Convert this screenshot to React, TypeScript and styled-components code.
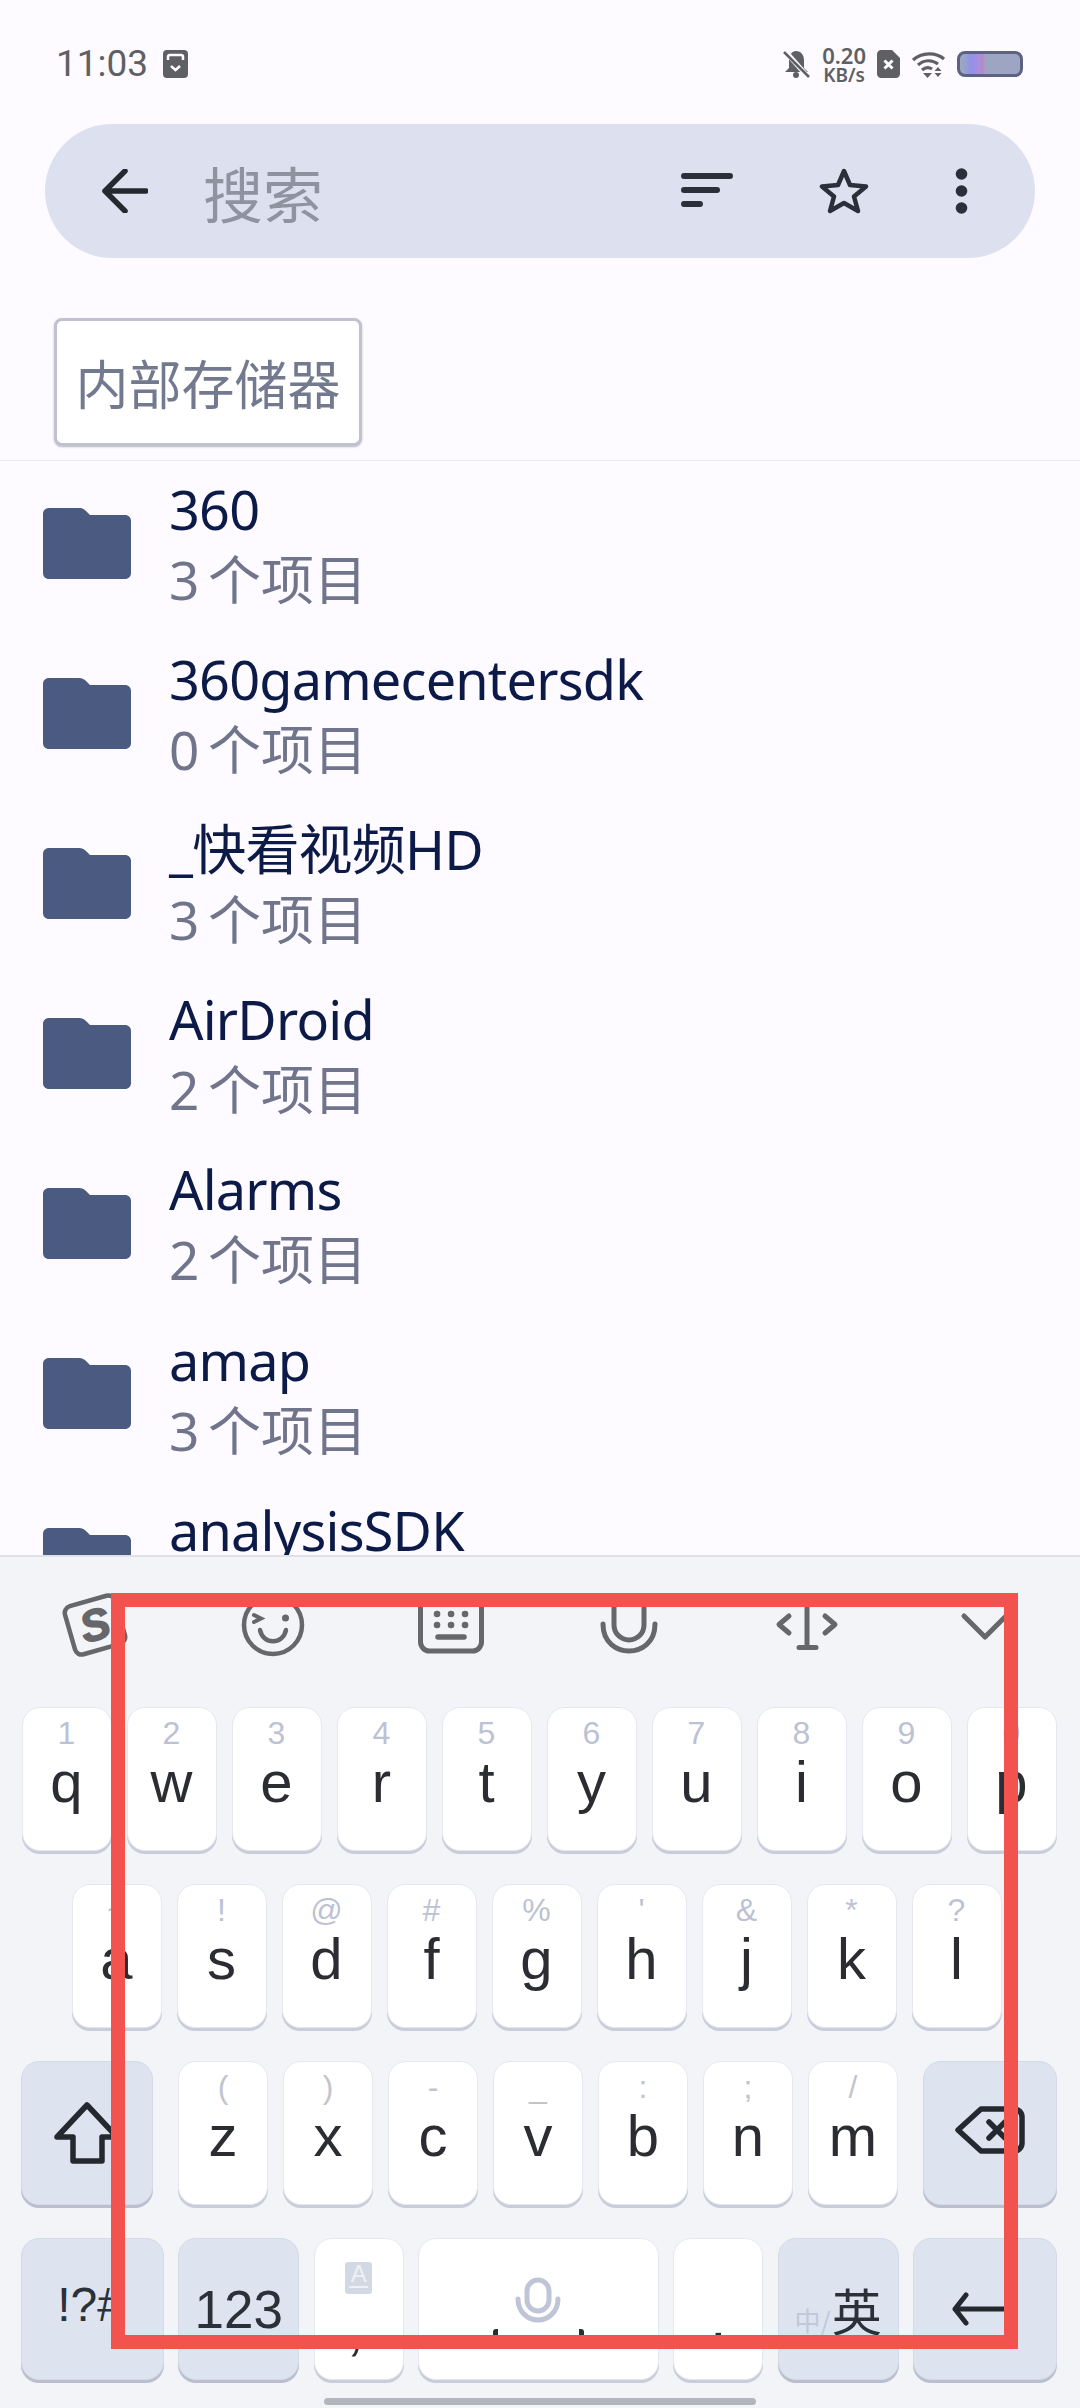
import styled, { createGlobalStyle } from "styled-components";

const GlobalStyle = createGlobalStyle`
  html, body {
    margin: 0;
    padding: 0;
    background: #fdfbff;
  }
  * {
    box-sizing: border-box;
  }
`;

const Screen = styled.div`
  position: relative;
  display: flex;
  flex-direction: column;
  width: 1080px;
  height: 2408px;
  overflow: hidden;
  background: #fdfbff;
  font-family: "Noto Sans", "Noto Sans CJK SC", sans-serif;
`;

const StatusBar = styled.div`
  display: flex;
  align-items: center;
  justify-content: space-between;
  flex: none;
  height: 124px;
  padding: 4px 57px 0 56px;
  color: #5f6064;
`;

const StatusLeft = styled.div`
  display: flex;
  align-items: center;
  gap: 15px;
`;

const Clock = styled.span`
  font-family: Roboto, sans-serif;
  font-size: 37px;
  line-height: 44px;
`;

const StatusRight = styled.div`
  display: flex;
  align-items: center;
`;

const Speed = styled.div`
  display: flex;
  flex-direction: column;
  align-items: center;
  margin: 0 11px 0 12px;
  font-family: "Noto Sans", sans-serif;
  font-weight: 600;
`;

const SpeedValue = styled.span`
  font-size: 22px;
  line-height: 22px;
`;

const SpeedUnit = styled.span`
  font-size: 19px;
  line-height: 19px;
`;

const Battery = styled.div`
  width: 66px;
  height: 26px;
  margin-left: 11px;
  border: 3px solid #5c6284;
  border-radius: 8px;
  background: linear-gradient(
    90deg,
    #9ea5c3 0 5%,
    #8f93e8 18%,
    #a88fe0 30%,
    #b48ac8 38%,
    #9ea5c3 42%
  );
`;

const SearchBar = styled.div`
  display: flex;
  align-items: center;
  flex: none;
  height: 134px;
  margin: 0 45px;
  padding: 0 67px 0 57px;
  border-radius: 67px;
  background: #dce0ef;
`;

const Placeholder = styled.span`
  margin-left: 55px;
  font-family: "Noto Sans CJK SC", sans-serif;
  font-size: 60px;
  font-weight: 400;
  color: #8f93a0;
`;

const SearchActions = styled.div`
  display: flex;
  align-items: center;
  gap: 86px;
  margin-left: auto;
`;

const BreadcrumbBar = styled.div`
  flex: none;
  height: 203px;
  padding: 60px 0 0 54px;
  border-bottom: 1px solid #eceaf0;
`;

const Chip = styled.div`
  display: flex;
  align-items: center;
  justify-content: center;
  width: 308px;
  height: 128px;
  border: 3px solid #c2c1cf;
  border-radius: 8px;
  background: #fff;
  box-shadow: 0 1px 2px #b5b5c5;
  font-family: "Noto Sans CJK SC", sans-serif;
  font-size: 53px;
  font-weight: 400;
  color: #737a90;
`;

const FileList = styled.div`
  flex: 1;
  min-height: 0;
  overflow: hidden;
`;

const FileRow = styled.div`
  display: flex;
  align-items: center;
  height: 170.1px;
  padding: 0 0 6px 43px;
`;

const FileText = styled.div`
  display: flex;
  flex-direction: column;
  min-height: 140px;
  margin: 2px 0 0 38px;
`;

const FileName = styled.span`
  font-size: 54px;
  line-height: 70px;
  letter-spacing: -0.8px;
  color: #0c1a48;
`;

const FileMeta = styled.span`
  margin-top: 2px;
  font-family: "Noto Sans", "Noto Sans CJK SC", sans-serif;
  font-size: 53px;
  font-weight: 400;
  line-height: 68px;
  word-spacing: -5px;
  color: #70758c;
`;

const Keyboard = styled.div`
  flex: none;
  display: flex;
  flex-direction: column;
  height: 853px;
  border-top: 2px solid #dfe1e6;
  background: #f2f4f8;
`;

const Toolbar = styled.div`
  display: grid;
  grid-template-columns: repeat(6, 178px);
  height: 150px;
  padding: 36px 0 0 6px;
  color: #66676b;
`;

const ToolCell = styled.div`
  display: flex;
  justify-content: center;
`;

const KeyRows = styled.div`
  display: flex;
  flex-direction: column;
  gap: 33px;
  padding: 0 23px 0 21px;
`;

const KeyRow = styled.div<{ $spread?: boolean; $nudge?: number }>`
  display: flex;
  justify-content: ${(p) => (p.$spread ? "space-between" : "center")};
  gap: ${(p) => (p.$spread ? "0" : "15px")};
  padding-right: ${(p) => p.$nudge ?? 0}px;
`;

const LetterGroup = styled.div`
  display: flex;
  gap: 15px;
`;

const Key = styled.div<{ $w?: number; $h?: number; $fn?: boolean }>`
  display: flex;
  flex-direction: column;
  align-items: center;
  width: ${(p) => p.$w ?? 90}px;
  height: ${(p) => p.$h ?? 144}px;
  border: 1px solid ${(p) => (p.$fn ? "#d5dae6" : "#e6e8ef")};
  border-radius: 18px;
  background: ${(p) => (p.$fn ? "#dde3ef" : "#fff")};
  box-shadow: 0 3px 0 ${(p) => (p.$fn ? "#b9bfce" : "#c9cdd9")};
  font-family: "Liberation Sans", Arial, sans-serif;
  color: #2b2d33;
`;

const Hint = styled.span<{ $pale?: boolean }>`
  margin-top: 7px;
  font-size: 32px;
  line-height: 36px;
  height: 36px;
  color: ${(p) => (p.$pale ? "#c3c5cb" : "#bcc2d3")};
`;

const Letter = styled.span`
  font-size: 58px;
  line-height: 62px;
`;

const FnKey = styled(Key)<{ $pb?: number; $pr?: number }>`
  justify-content: center;
  padding-bottom: ${(p) => p.$pb ?? 0}px;
  padding-right: ${(p) => p.$pr ?? 0}px;
`;

const FnLabel = styled.span<{ $size: number }>`
  font-size: ${(p) => p.$size}px;
  color: #2c3038;
`;

const Badge = styled.span`
  display: flex;
  flex-direction: column;
  align-items: center;
  width: 27px;
  height: 32px;
  margin-top: 23px;
  border-radius: 3px;
  background: #d3d8e5;
  font-size: 24px;
  line-height: 24px;
  color: #eef0f6;
`;

const BadgeRule = styled.span`
  width: 19px;
  height: 2px;
  background: #eef0f6;
`;

const Comma = styled.span`
  margin-top: 4px;
  font-size: 58px;
  font-style: italic;
  line-height: 62px;
  color: #2b2d33;
`;

const Period = styled.span`
  margin-top: 49px;
  font-size: 58px;
  line-height: 62px;
  color: #2b2d33;
`;

const SpaceBracket = styled.span`
  width: 91px;
  height: 18px;
  margin-top: 6px;
  border: solid #2b2d33;
  border-width: 0 5px 5px;
  border-radius: 3px;
`;

const SpaceMic = styled.svg`
  margin-top: 38px;
`;

const LangLabel = styled.div`
  display: flex;
  align-items: baseline;
  font-family: "Noto Sans CJK SC", sans-serif;
  color: #2c3038;
`;

const LangOff = styled.span`
  font-size: 26px;
  color: #c2c8d9;
`;

const LangOn = styled.span`
  margin-left: 1px;
  font-size: 50px;
`;

const HomeBar = styled.div`
  position: absolute;
  left: 324px;
  bottom: 3px;
  width: 432px;
  height: 7px;
  border-radius: 4px;
  background: #b4b6bd;
`;

const Annotation = styled.div`
  position: absolute;
  left: 111px;
  top: 1593px;
  width: 907px;
  height: 756px;
  border: 14px solid #f2534e;
  pointer-events: none;
`;

const files = [
  { name: "360", meta: "3 个项目" },
  { name: "360gamecentersdk", meta: "0 个项目" },
  { name: "_快看视频HD", meta: "3 个项目" },
  { name: "AirDroid", meta: "2 个项目" },
  { name: "Alarms", meta: "2 个项目" },
  { name: "amap", meta: "3 个项目" },
  { name: "analysisSDK" },
];

const row1 = [
  ["q", "1"],
  ["w", "2"],
  ["e", "3"],
  ["r", "4"],
  ["t", "5"],
  ["y", "6"],
  ["u", "7"],
  ["i", "8"],
  ["o", "9"],
  ["p", "0"],
];
const row2 = [
  ["a", "~"],
  ["s", "!"],
  ["d", "@"],
  ["f", "#"],
  ["g", "%"],
  ["h", "'"],
  ["j", "&"],
  ["k", "*"],
  ["l", "?"],
];
const row3 = [
  ["z", "("],
  ["x", ")"],
  ["c", "-"],
  ["v", "_"],
  ["b", ":"],
  ["n", ";"],
  ["m", "/"],
];

function FolderIcon() {
  return (
    <svg width="88" height="71" viewBox="0 0 88 71">
      <path
        d="M6 0H36C39 0 41 1 43 3L47 7H82C85.500 7 88 9.500 88 13V65C88 68.500 85.500 71 82 71H6C2.500 71 0 68.500 0 65V6C0 2.500 2.500 0 6 0Z"
        fill="#4a5a80"
      />
    </svg>
  );
}

function LetterKey({ letter, hint, pale }: { letter: string; hint: string; pale?: boolean }) {
  return (
    <Key>
      <Hint $pale={pale}>{hint}</Hint>
      <Letter>{letter}</Letter>
    </Key>
  );
}

function App() {
  return (
    <Screen>
      <GlobalStyle />
      <StatusBar>
        <StatusLeft>
          <Clock>11:03</Clock>
          <svg width="25" height="28" viewBox="0 0 25 28">
            <rect width="25" height="28" rx="4" fill="#5f6064" />
            <path d="M5 10V7C5 5.500 6 5 7 5H18C19 5 20 5.500 20 7V10" fill="none" stroke="#fdfbff" strokeWidth="2.500" />
            <path d="M8 16L12.500 20L17 16" fill="none" stroke="#fdfbff" strokeWidth="2.500" />
          </svg>
        </StatusLeft>
        <StatusRight>
          <svg width="27" height="28" viewBox="0 0 27 28">
            <path d="M13 1C18 1 21 5 21 10V18L25 22H2L6 18V10C6 5 9 1 13 1Z" fill="#5f6064" />
            <circle cx="13" cy="25" r="3" fill="#5f6064" />
            <path d="M2 1L25 27" stroke="#fdfbff" strokeWidth="5" />
            <path d="M1 2L26 27" stroke="#5f6064" strokeWidth="2.500" />
          </svg>
          <Speed>
            <SpeedValue>0.20</SpeedValue>
            <SpeedUnit>KB/s</SpeedUnit>
          </Speed>
          <svg width="23" height="28" viewBox="0 0 23 28">
            <path d="M4 0H15L23 8V24C23 26 21 28 19 28H4C2 28 0 26 0 24V4C0 2 2 0 4 0Z" fill="#5f6064" />
            <path d="M7.500 10.500L15.500 18.500M15.500 10.500L7.500 18.500" stroke="#fff" strokeWidth="3" />
          </svg>
          <svg width="35" height="27" viewBox="0 0 35 27" style={{ marginLeft: 11 }}>
            <g fill="none" stroke="#5f6064" strokeWidth="3.200">
              <path d="M2 9C11 1 25 1 33 8" />
              <path d="M7 14C13 8.500 21 8.500 27 13" />
              <path d="M11 19C14.500 16 18 16 21 18" />
            </g>
            <path d="M12 22H21L16.500 27Z" fill="#5f6064" />
            <path d="M27 16L30.500 20H23.500ZM23.500 22H30.500L27 26Z" fill="#5f6064" />
          </svg>
          <Battery />
        </StatusRight>
      </StatusBar>

      <SearchBar>
        <svg width="46" height="44" viewBox="0 0 46 44">
          <path d="M23 2L3 22L23 42M3 22H44" fill="none" stroke="#24282f" strokeWidth="5.500" strokeLinecap="round" strokeLinejoin="round" />
        </svg>
        <Placeholder>搜索</Placeholder>
        <SearchActions>
          <svg width="52" height="36" viewBox="0 0 52 36">
            <path d="M3 3H49M3 17H36M3 31H19" stroke="#2b2f3a" strokeWidth="6" strokeLinecap="round" />
          </svg>
          <svg width="50" height="46" viewBox="0 0 50 46">
            <path d="M25 3L31 17L47 18.500L35 28.500L39 43L25 35L11 43L15 28.500L3 18.500L19 17Z" fill="none" stroke="#2b2f3a" strokeWidth="4.500" strokeLinejoin="round" />
          </svg>
          <svg width="13" height="46" viewBox="0 0 13 46">
            <circle cx="6.500" cy="6" r="5.800" fill="#2b2f3a" />
            <circle cx="6.500" cy="23" r="5.800" fill="#2b2f3a" />
            <circle cx="6.500" cy="40" r="5.800" fill="#2b2f3a" />
          </svg>
        </SearchActions>
      </SearchBar>

      <BreadcrumbBar>
        <Chip>内部存储器</Chip>
      </BreadcrumbBar>

      <FileList>
        {files.map((file) => (
          <FileRow key={file.name}>
            <FolderIcon />
            <FileText>
              <FileName>{file.name}</FileName>
              {file.meta && <FileMeta>{file.meta}</FileMeta>}
            </FileText>
          </FileRow>
        ))}
      </FileList>

      <Keyboard>
        <Toolbar>
          <ToolCell>
            <svg width="80" height="64" viewBox="0 0 80 64">
              <g transform="rotate(-16 40 32)">
                <rect x="14" y="7" width="52" height="50" rx="7" fill="none" stroke="currentColor" strokeWidth="4.500" />
                <text x="40" y="47" textAnchor="middle" fontFamily="Liberation Sans" fontWeight="700" fontStyle="italic" fontSize="44" stroke="currentColor" strokeWidth="1.500" fill="currentColor">
                  S
                </text>
              </g>
            </svg>
          </ToolCell>
          <ToolCell>
            <svg width="80" height="64" viewBox="0 0 80 64" fill="none" stroke="currentColor" strokeWidth="4.500" strokeLinecap="round">
              <circle cx="40" cy="32" r="29" />
              <path d="M21 22L28 25.500L21 29" strokeWidth="4" />
              <circle cx="52.500" cy="25" r="3.500" fill="currentColor" stroke="none" />
              <path d="M27 37C30 52 50 52 53 37" />
            </svg>
          </ToolCell>
          <ToolCell>
            <svg width="80" height="64" viewBox="0 0 80 64" fill="none" stroke="currentColor" strokeWidth="5" strokeLinecap="round">
              <rect x="9.500" y="2" width="61" height="56" rx="9" />
              <path d="M26 21H26.100M40 21H40.100M54 21H54.100M26 32H26.100M40 32H40.100M54 32H54.100" strokeWidth="6.500" />
              <path d="M27 44H53" strokeWidth="5.500" />
            </svg>
          </ToolCell>
          <ToolCell>
            <svg width="80" height="64" viewBox="0 0 80 64" fill="none" stroke="currentColor" strokeWidth="5" strokeLinecap="round">
              <path d="M14 31C14 50 28 58 40 58C52 58 66 50 66 31" />
              <rect x="25" y="0" width="30" height="47" rx="15" />
            </svg>
          </ToolCell>
          <ToolCell>
            <svg width="80" height="64" viewBox="0 0 80 64" fill="none" stroke="currentColor" strokeWidth="5" strokeLinecap="round" strokeLinejoin="round">
              <path d="M40 4V54M32 54.500H49" />
              <path d="M22 23L12 31.500L22 40M58 23L68 31.500L58 40" />
            </svg>
          </ToolCell>
          <ToolCell>
            <svg width="80" height="64" viewBox="0 0 80 64" fill="none" stroke="currentColor" strokeWidth="5" strokeLinecap="round" strokeLinejoin="round">
              <path d="M19 23L40 44L61 23" />
            </svg>
          </ToolCell>
        </Toolbar>

        <KeyRows>
          <KeyRow>
            {row1.map(([letter, hint]) => (
              <LetterKey key={letter} letter={letter} hint={hint} />
            ))}
          </KeyRow>
          <KeyRow $nudge={5}>
            {row2.map(([letter, hint]) => (
              <LetterKey key={letter} letter={letter} hint={hint} />
            ))}
          </KeyRow>
          <KeyRow $spread>
            <FnKey $w={132} $fn>
              <svg width="70" height="62" viewBox="0 0 70 62">
                <path d="M35 3L65 35H50V59H21V35H5Z" fill="none" stroke="#24282f" strokeWidth="5.500" strokeLinejoin="round" />
              </svg>
            </FnKey>
            <LetterGroup>
              {row3.map(([letter, hint]) => (
                <LetterKey key={letter} letter={letter} hint={hint} pale />
              ))}
            </LetterGroup>
            <FnKey $w={134} $fn $pb={5}>
              <svg width="72" height="52" viewBox="0 0 72 52">
                <path d="M4 25L27 4H60C64.500 4 68 7.500 68 12V38C68 42.500 64.500 46 60 46H27Z" fill="none" stroke="#24282f" strokeWidth="5.500" strokeLinejoin="round" />
                <path d="M35 17L51 33M51 17L35 33" stroke="#24282f" strokeWidth="5.500" strokeLinecap="round" />
              </svg>
            </FnKey>
          </KeyRow>
          <KeyRow $spread>
            <FnKey $w={143} $h={142} $fn $pb={10} $pr={4}>
              <FnLabel $size={48}>!?#</FnLabel>
            </FnKey>
            <FnKey $w={121} $h={142} $fn>
              <FnLabel $size={53}>123</FnLabel>
            </FnKey>
            <Key $w={90} $h={142}>
              <Badge>
                A
                <BadgeRule />
              </Badge>
              <Comma>,</Comma>
            </Key>
            <Key $w={241} $h={142}>
              <SpaceMic width="46" height="46" viewBox="0 0 46 46" fill="none" stroke="#bfc5d6" strokeWidth="5" strokeLinecap="round">
                <rect x="12" y="3" width="22" height="31" rx="11" />
                <path d="M3 22C3 35 13 43 23 43C33 43 43 35 43 22" />
              </SpaceMic>
              <SpaceBracket />
            </Key>
            <Key $w={90} $h={142}>
              <Period>.</Period>
            </Key>
            <FnKey $w={121} $h={142} $fn>
              <LangLabel>
                <LangOff>中/</LangOff>
                <LangOn>英</LangOn>
              </LangLabel>
            </FnKey>
            <FnKey $w={144} $h={142} $fn>
              <svg width="66" height="34" viewBox="0 0 66 34">
                <path d="M14 3L3 17L14 31M3 17H63" fill="none" stroke="#24282f" strokeWidth="5" strokeLinecap="round" strokeLinejoin="round" />
              </svg>
            </FnKey>
          </KeyRow>
        </KeyRows>
      </Keyboard>

      <HomeBar />
      <Annotation />
    </Screen>
  );
}

export default App;
